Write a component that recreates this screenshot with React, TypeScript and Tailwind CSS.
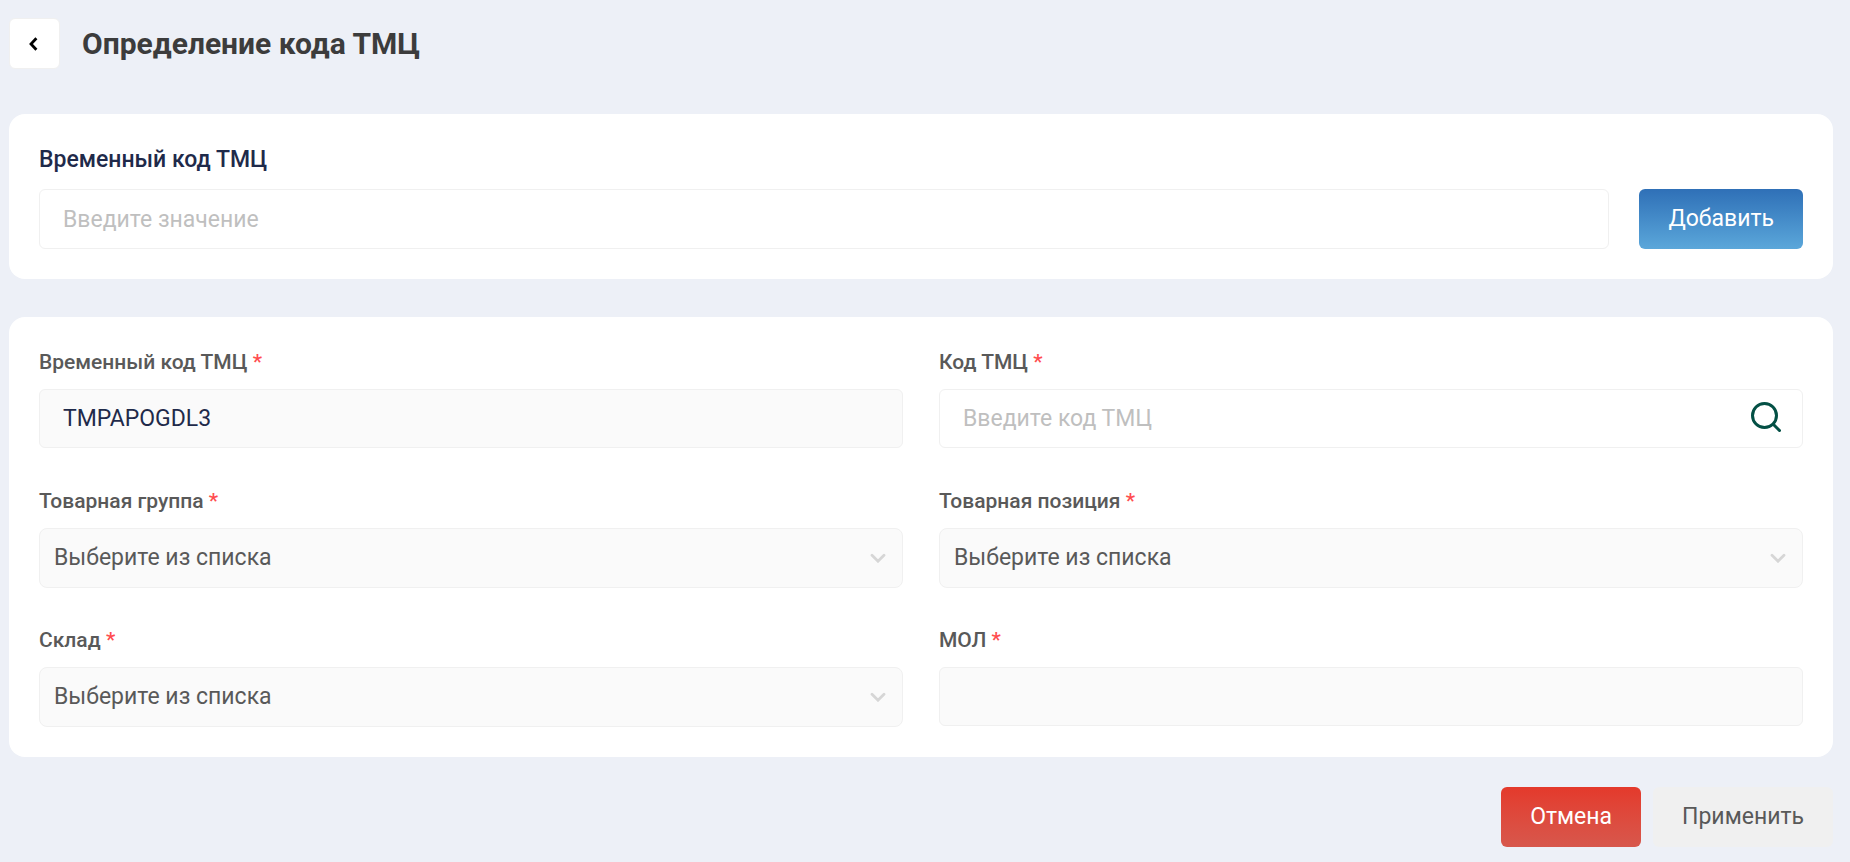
import React, { useState } from 'react';

interface FieldProps {
  id: string;
  label: string;
  children: React.ReactNode;
}

const inputClass =
  'h-[59px] w-full rounded-md border border-[#f0f0f0] px-[23px] text-[23px] text-[#1f2a4a] outline-none placeholder:text-[#bfbfbf]';

// Form row: label with the required mark above its control
function Field({ id, label, children }: FieldProps) {
  return (
    <div>
      <label htmlFor={id} className="mb-3 block text-[21px] leading-[30px] font-medium text-[#595959]">
        {label} <span className="text-[#ff4d4f]">*</span>
      </label>
      {children}
    </div>
  );
}

function SelectBox({ id }: { id: string }) {
  return (
    <div className="relative">
      <select
        id={id}
        defaultValue=""
        className="block h-[60px] w-full appearance-none rounded-lg border border-[#f0f0f0] bg-[#fafafa] pr-12 pl-3.5 text-[23px] text-[#595959] outline-none"
      >
        <option value="">Выберите из списка</option>
      </select>
      <svg
        viewBox="0 0 16 10"
        className="pointer-events-none absolute top-1/2 right-[17px] h-2.5 w-4 -translate-y-1/2"
        fill="none"
        stroke="#d6d6d6"
        strokeWidth="2.8"
        strokeLinecap="round"
        aria-hidden="true"
      >
        <path d="M2 2.2 8 8.2 14 2.2" />
      </svg>
    </div>
  );
}

export default function App() {
  const [tempCode, setTempCode] = useState('');
  const [code, setCode] = useState('');

  return (
    <div className="min-h-screen bg-[#edf0f7] pt-[18px] pr-[17px] pb-[15px] pl-[9px] font-['Roboto','Noto_Sans',sans-serif]">
      {/* Page header */}
      <header className="flex items-center gap-[22px]">
        <button
          type="button"
          aria-label="Назад"
          className="flex size-[51px] shrink-0 items-center justify-center rounded-md border border-[#f0f0f0] bg-white"
        >
          <svg viewBox="0 0 10 14" className="mr-1 h-3.5 w-2.5" fill="none" stroke="#000" strokeWidth="2.8" aria-hidden="true">
            <path d="M8.4 1.2 3 7 8.4 12.8" />
          </svg>
        </button>
        <h1 className="text-[30px] leading-9 font-bold text-[#3c3c3c]">Определение кода ТМЦ</h1>
      </header>

      <main>
        {/* Adding a temporary code */}
        <section className="mt-[45px] rounded-2xl bg-white p-[30px]">
          <label htmlFor="temp-code" className="mb-3.5 block text-[23px] leading-[31px] font-medium text-[#1f2a4a]">
            Временный код ТМЦ
          </label>
          <div className="flex gap-[30px]">
            <input
              id="temp-code"
              type="text"
              value={tempCode}
              onChange={(e) => setTempCode(e.target.value)}
              placeholder="Введите значение"
              className="h-[60px] min-w-0 flex-1 rounded-md border border-[#f0f0f0] px-[23px] text-[23px] text-[#1f2a4a] outline-none placeholder:text-[#bfbfbf]"
            />
            <button
              type="button"
              className="h-[60px] rounded-md bg-gradient-to-b from-[#2f70b7] to-[#5ba7da] px-[29px] text-[23px] text-white"
            >
              Добавить
            </button>
          </div>
        </section>

        {/* Code details */}
        <section className="mt-[38px] grid auto-rows-fr grid-cols-2 gap-x-9 gap-y-[37px] rounded-2xl bg-white p-[30px]">
          <Field id="item-temp-code" label="Временный код ТМЦ">
            <input id="item-temp-code" type="text" value="TMPAPOGDL3" readOnly className={`${inputClass} bg-[#fafafa]`} />
          </Field>

          <Field id="item-code" label="Код ТМЦ">
            <div className="flex h-[59px] items-center rounded-md border border-[#f0f0f0] pr-[21px] pl-[23px]">
              <input
                id="item-code"
                type="text"
                value={code}
                onChange={(e) => setCode(e.target.value)}
                placeholder="Введите код ТМЦ"
                className="h-full min-w-0 flex-1 text-[23px] text-[#1f2a4a] outline-none placeholder:text-[#bfbfbf]"
              />
              <button type="button" aria-label="Найти" className="pb-0.5">
                <svg
                  viewBox="0 0 30 32"
                  className="h-8 w-[30px]"
                  fill="none"
                  stroke="#045045"
                  strokeWidth="3"
                  strokeLinecap="round"
                  aria-hidden="true"
                >
                  <circle cx="13.5" cy="13.5" r="12" />
                  <path d="M22.5 22.5 28.5 28.5" />
                </svg>
              </button>
            </div>
          </Field>

          <Field id="group" label="Товарная группа">
            <SelectBox id="group" />
          </Field>

          <Field id="position" label="Товарная позиция">
            <SelectBox id="position" />
          </Field>

          <Field id="warehouse" label="Склад">
            <SelectBox id="warehouse" />
          </Field>

          <Field id="mol" label="МОЛ">
            <input id="mol" type="text" value="" readOnly className={`${inputClass} bg-[#fafafa]`} />
          </Field>
        </section>
      </main>

      <footer className="mt-[30px] flex justify-end gap-3">
        <button
          type="button"
          className="h-[60px] rounded-md bg-gradient-to-b from-[#e4392b] to-[#d7574c] px-[29px] text-[23px] text-white"
        >
          Отмена
        </button>
        <button type="button" className="h-[60px] rounded-md bg-[#f0f0f0] px-[29px] text-[23px] text-[#595959]">
          Применить
        </button>
      </footer>
    </div>
  );
}
